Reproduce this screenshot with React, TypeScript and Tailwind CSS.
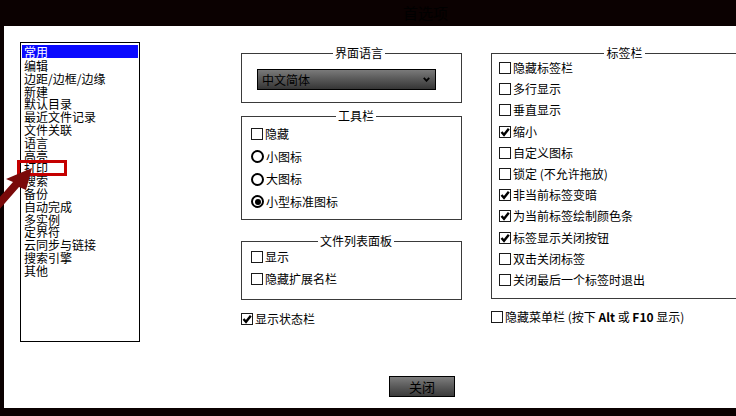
import React from 'react';

const cjk = { fontFamily: '"Noto Sans CJK SC", "Liberation Sans", sans-serif' };

const categories = [
  '编辑',
  '边距/边框/边缘',
  '新建',
  '默认目录',
  '最近文件记录',
  '文件关联',
  '语言',
  '高亮',
  '打印',
  '搜索',
  '备份',
  '自动完成',
  '多实例',
  '定界符',
  '云同步与链接',
  '搜索引擎',
  '其他',
];

const Check = ({ checked }: { checked?: boolean }) => (
  <span className="flex h-[12px] w-[12px] shrink-0 items-center justify-center border border-[#1a1a1a] bg-white">
    {checked && (
      <svg width="10" height="10" viewBox="0 0 10 10">
        <path d="M1.5 5 L4 7.8 L8.8 1.8" fill="none" stroke="#000" strokeWidth="2.4" />
      </svg>
    )}
  </span>
);

const Radio = ({ checked }: { checked?: boolean }) => (
  <span className="flex h-[13px] w-[13px] shrink-0 items-center justify-center rounded-full border-2 border-black bg-white">
    {checked && <span className="h-[6px] w-[6px] rounded-full bg-black" />}
  </span>
);

const Row = ({
  children,
  checked,
  radio,
  className = 'h-[22px]',
}: {
  children: React.ReactNode;
  checked?: boolean;
  radio?: boolean;
  className?: string;
}) => (
  <div className={`flex items-center ${className}`}>
    {radio ? <Radio checked={checked} /> : <Check checked={checked} />}
    <span className="ml-[2px] whitespace-nowrap text-[12px] leading-[14px] text-black">{children}</span>
  </div>
);

const Group = ({
  title,
  className,
  children,
}: {
  title: string;
  className: string;
  children: React.ReactNode;
}) => (
  <fieldset className={`border border-[#3a3a3a] ${className}`}>
    <legend className="mx-auto px-[2px] text-[12px] leading-[14px] text-black">{title}</legend>
    {children}
  </fieldset>
);

export default function App() {
  return (
    <div className="relative flex h-[416px] w-[736px] flex-col overflow-hidden bg-[#0b0101]" style={cjk}>
      {/* title bar */}
      <div className="h-[26px] shrink-0 pl-[403px] pt-[4px] text-[15px] leading-[18px] text-black">首选项</div>

      <div className="ml-[4px] flex flex-1 flex-col overflow-hidden bg-white">
        <div className="flex items-start pt-[16px]">
          {/* category list */}
          <div className="ml-[16px] h-[300px] w-[120px] shrink-0 border border-black bg-white p-[1px] text-[12px] text-black">
            <div className="h-[16px] pt-[1px]">
              <div className="h-[13px] bg-[#0a0aff] pl-[2px] leading-[13px] text-white">常用</div>
            </div>
            {categories.map((c) => (
              <div key={c} className="h-[12.8px] whitespace-nowrap pl-[2px] leading-[12.8px]">
                {c}
              </div>
            ))}
          </div>

          {/* middle column */}
          <div className="ml-[101px] flex w-[221px] shrink-0 flex-col">
            <Group title="界面语言" className="mt-[4px] pb-[12px] pl-[15px] pt-[9px]">
              <div className="flex h-[21px] w-[179px] items-center justify-between border border-black bg-gradient-to-b from-[#7a7a7a] via-[#575757] to-[#363636] pl-[4px] pr-[5px]">
                <span className="text-[12px] leading-[14px] text-black">中文简体</span>
                <svg width="7" height="5" viewBox="0 0 7 5">
                  <path d="M0.8 0.8 L3.5 3.8 L6.2 0.8" fill="none" stroke="#000" strokeWidth="1.8" />
                </svg>
              </div>
            </Group>

            <Group title="工具栏" className="mt-[6px] pb-[6px] pl-[9px]">
              <Row className="h-[22.5px]">隐藏</Row>
              <Row className="h-[22.5px]" radio>
                小图标
              </Row>
              <Row className="h-[22.5px]" radio>
                大图标
              </Row>
              <Row className="h-[22.5px]" radio checked>
                小型标准图标
              </Row>
            </Group>

            <Group title="文件列表面板" className="mt-[14px] pb-[9px] pl-[9px]">
              <div className="-mt-[2px]">
                <Row>显示</Row>
                <Row>隐藏扩展名栏</Row>
              </div>
            </Group>

            <div className="mt-[8px]">
              <Row checked>显示状态栏</Row>
            </div>
          </div>

          {/* right column */}
          <div className="ml-[29px] flex w-[260px] shrink-0 flex-col">
            <Group title="标签栏" className="mt-[4px] pb-[8px] pl-[7px]">
              <div className="-mt-[2.6px]">
                <Row className="h-[21.2px]">隐藏标签栏</Row>
                <Row className="h-[21.2px]">多行显示</Row>
                <Row className="h-[21.2px]">垂直显示</Row>
                <Row className="h-[21.2px]" checked>
                  缩小
                </Row>
                <Row className="h-[21.2px]">自定义图标</Row>
                <Row className="h-[21.2px]">锁定 (不允许拖放)</Row>
                <Row className="h-[21.2px]" checked>
                  非当前标签变暗
                </Row>
                <Row className="h-[21.2px]" checked>
                  为当前标签绘制颜色条
                </Row>
                <Row className="h-[21.2px]" checked>
                  标签显示关闭按钮
                </Row>
                <Row className="h-[21.2px]">双击关闭标签</Row>
                <Row className="h-[21.2px]">关闭最后一个标签时退出</Row>
              </div>
            </Group>
            <div className="mt-[7px]">
              <Row>
                隐藏菜单栏 (按下 <b className="font-bold">Alt</b> 或 <b className="font-bold">F10</b> 显示)
              </Row>
            </div>
          </div>
        </div>

        {/* close button */}
        <div className="ml-[385px] mt-[34px] flex h-[21px] w-[66px] items-center justify-center border border-black bg-gradient-to-b from-[#7e7e7e] via-[#5a5a5a] to-[#3c3c3c] text-[13px] leading-[15px] text-black">
          关闭
        </div>
      </div>

      <div className="h-[8px] shrink-0" />

      {/* annotation: red box + arrow */}
      <div className="absolute left-[17px] top-[160px] h-[16px] w-[50px] border-[3px] border-[#c40000]" />
      <svg className="absolute left-0 top-[160px]" width="40" height="60" viewBox="0 160 40 60">
        <polygon
          points="32,168 26,190 19,187.1 -5,214.6 -11,209.4 13,181.9 6,179"
          fill="#7a0a0a"
        />
      </svg>
    </div>
  );
}
